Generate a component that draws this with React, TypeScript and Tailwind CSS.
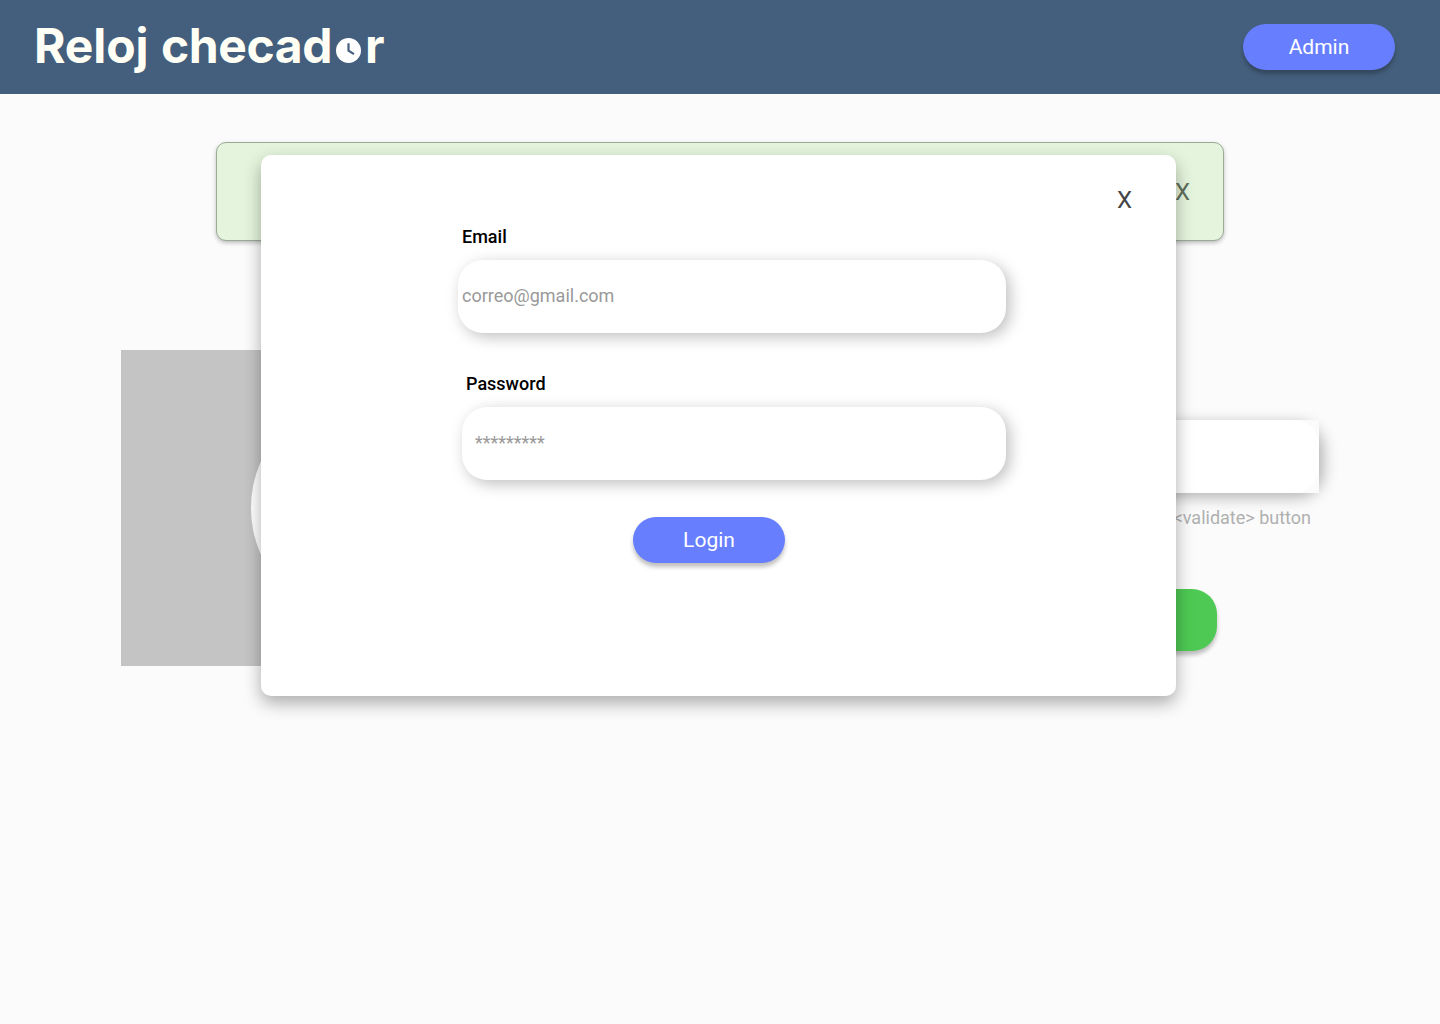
const buttonStyle =
  'flex h-[46px] w-[152px] items-center justify-center rounded-full bg-[#677fff] pt-[2px] text-[21px] text-white shadow-[0_4px_4px_rgba(0,0,0,0.25)]';

const inputStyle =
  'flex h-[73px] items-center rounded-[25px] bg-white pb-[2px] text-[18px] text-[#999999] shadow-[4px_4px_15px_rgba(0,0,0,0.25)]';

function Clock() {
  return (
    <svg className="ml-[4px] mr-[4px] h-[25px] w-[25px]" viewBox="0 0 25 25" fill="none">
      <circle cx="12.5" cy="12.5" r="12.5" fill="#ffffff" />
      <path d="M12.5 5.2v7.4l5.5 3.5" stroke="#445f7d" strokeWidth="2.2" />
    </svg>
  );
}

function Header() {
  return (
    <header className="flex h-[94px] items-start justify-between bg-[#445f7d] pl-[34px] pr-[45px] pt-[23px]">
      <h1 className="flex h-[46px] items-center font-['Inter',sans-serif] text-[48px] font-bold leading-none text-[#fffff5]">
        <span className="w-[127px] whitespace-nowrap tracking-[-0.1px]">Reloj</span>
        <span className="w-[171px] whitespace-nowrap tracking-[-0.4px]">checad</span>
        <span className="flex pt-[9px]"><Clock /></span>
        <span>r</span>
      </h1>
      <button className={`${buttonStyle} mt-[1px]`}>Admin</button>
    </header>
  );
}

function Background() {
  return (
    <main className="flex flex-col pt-12">
      <section className="mx-auto flex h-[99px] w-[1008px] items-center justify-end rounded-[10px] border border-[#9aab98] bg-[#e5f5dd] pr-[33px] text-[24px] text-[#5f6f5b] shadow-[0_2px_4px_rgba(0,0,0,0.25)]">
        X
      </section>
      <div className="mt-[109px] flex justify-between px-[121px]">
        <div className="flex h-[316px] w-[490px] items-center justify-center bg-[#c4c4c4]">
          <div className="h-[230px] w-[230px] rounded-full bg-white" />
        </div>
        <div className="flex w-[500px] flex-col pt-[70px]">
          <div className="grid h-[73px]">
            <div className="col-start-1 row-start-1 rounded-[25px] shadow-[4px_4px_15px_rgba(0,0,0,0.3)]" />
            <div className="col-start-1 row-start-1 bg-[#fbfbfb]" />
            <div className="col-start-1 row-start-1 rounded-[25px] bg-white" />
          </div>
          <p className="mt-[12px] pr-[8px] text-right text-[18px] leading-[26px] text-[#b0b0b0]">&lt;validate&gt; button</p>
          <div className="mr-[102px] mt-[58px] h-[62px] w-[250px] self-end rounded-[25px] bg-[#4ec953] shadow-[0_4px_4px_rgba(0,0,0,0.25)]" />
        </div>
      </div>
    </main>
  );
}

function LoginDialog() {
  return (
    <div
      role="dialog"
      className="absolute left-[261px] top-[155px] flex h-[541px] w-[915px] flex-col rounded-[10px] bg-white pt-[30px] shadow-[0_7px_17px_rgba(0,0,0,0.32)]"
    >
      <button className="mr-[44px] pt-[1px] self-end text-[24px] leading-[29px] text-[#444444]">X</button>
      <form className="ml-[197px] flex w-[548px] flex-col">
        <label className="ml-[4px] mt-[11px] text-[18px] font-medium leading-[22px] text-black">Email</label>
        <div className={`${inputStyle} mt-[12px] pl-[4px]`}>correo@gmail.com</div>
        <label className="ml-[8px] mt-[40px] text-[18px] font-medium leading-[22px] text-black">Password</label>
        <div className={`${inputStyle} ml-[4px] mt-[12px] pl-[13px]`}>*********</div>
        <div className="ml-[175px] mt-[37px]">
          <button type="button" className={buttonStyle}>Login</button>
        </div>
      </form>
    </div>
  );
}

export default function App() {
  return (
    <div className="relative h-[1024px] w-[1440px] overflow-hidden bg-[#fbfbfb] font-['Roboto',sans-serif]">
      <Header />
      <Background />
      <LoginDialog />
    </div>
  );
}
